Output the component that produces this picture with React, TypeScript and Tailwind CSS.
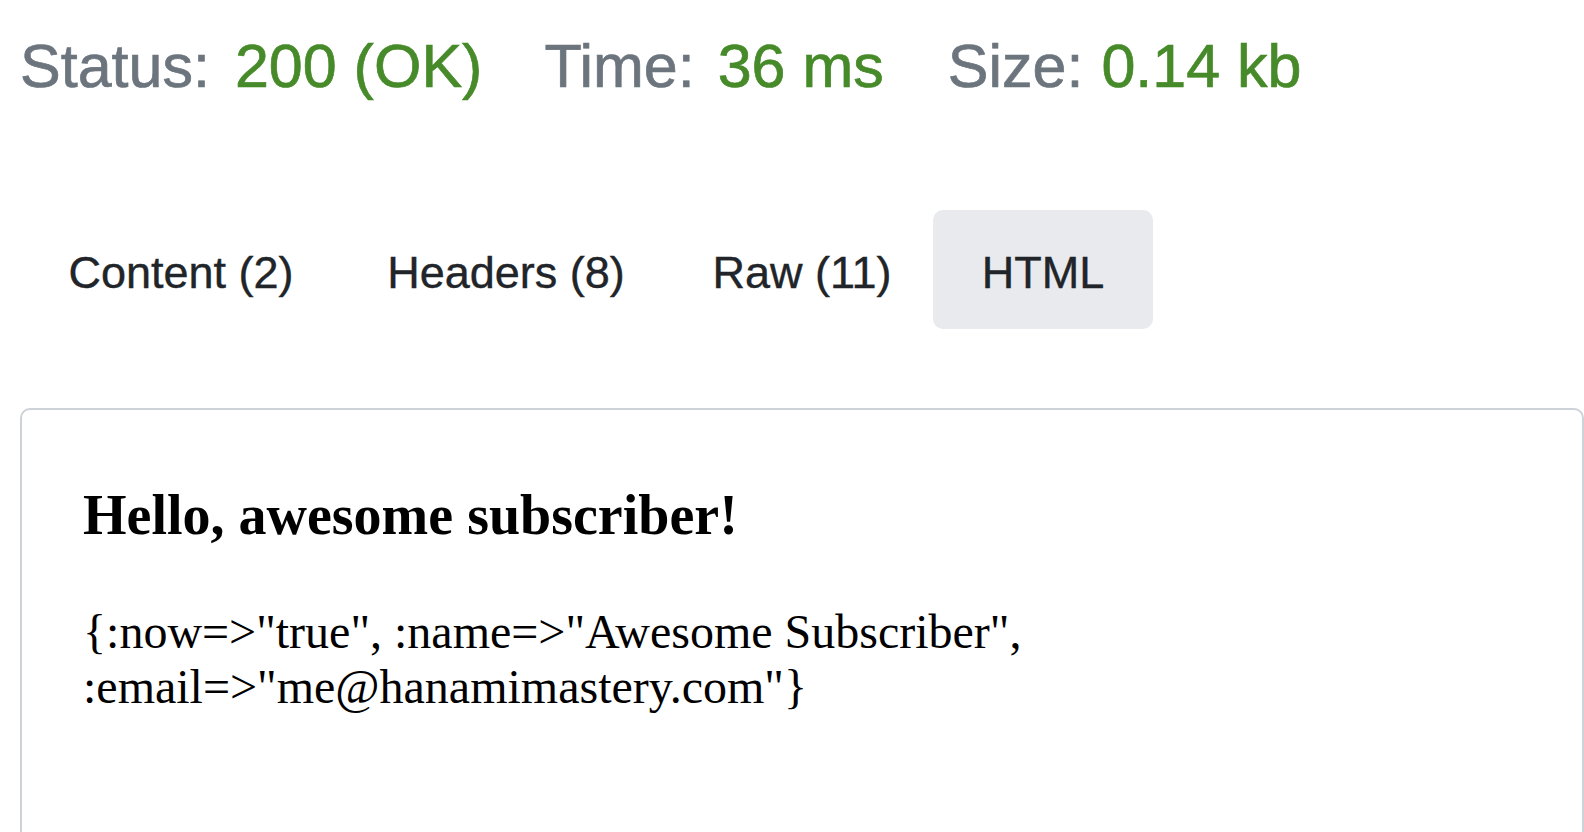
import React from "react";

export default function App() {
  const tabs = [
    { label: "Content (2)", active: false, w: "w-[320px]" },
    { label: "Headers (8)", active: false, w: "w-[330px]" },
    { label: "Raw (11)", active: false, w: "w-[262px]" },
    { label: "HTML", active: true, w: "w-[220px]" },
  ];
  return (
    <div className="min-h-[832px] w-[1584px] overflow-hidden bg-white">
      <div
        className="flex items-baseline pl-[20px] pt-[36px] text-[61px] leading-[61px] text-[#6c757d] [-webkit-text-stroke:0.7px_currentColor]"
        style={{ fontFamily: '"Liberation Sans", Arial, sans-serif' }}
      >
        <span>Status:</span>
        <span className="ml-[25px] text-[#468a29]">200 (OK)</span>
        <span className="ml-[62px]">Time:</span>
        <span className="ml-[23px] text-[#468a29]">36 ms</span>
        <span className="ml-[64px]">Size:</span>
        <span className="ml-[18px] text-[#468a29]">0.14 kb</span>
      </div>

      <div
        className="mt-[113px] flex pl-[21px] text-[45px] leading-[45px] text-[#212529] [-webkit-text-stroke:0.4px_currentColor]"
        style={{ fontFamily: '"Liberation Sans", Arial, sans-serif' }}
      >
        {tabs.map((t) => (
          <div
            key={t.label}
            className={
              (t.active ? "bg-[#e9eaee] " : "") +
              t.w +
              " flex justify-center whitespace-nowrap rounded-[10px] pt-[40px] pb-[34px]"
            }
          >
            {t.label}
          </div>
        ))}
      </div>

      <div className="ml-[20px] mt-[79px] h-[520px] rounded-[10px] border-2 border-[#cdd2d8] pl-[61px] pt-[73px]">
        <div
          className="text-black"
          style={{ fontFamily: '"Liberation Serif", "Times New Roman", serif' }}
        >
          <h3 className="text-[56px] font-bold leading-[64px]">Hello, awesome subscriber!</h3>
          <p className="mt-[57px] max-w-[1460px] text-[48px] leading-[55px]">
            {'{:now=>"true", :name=>"Awesome Subscriber", :email=>"me@hanamimastery.com"}'}
          </p>
        </div>
      </div>
    </div>
  );
}
